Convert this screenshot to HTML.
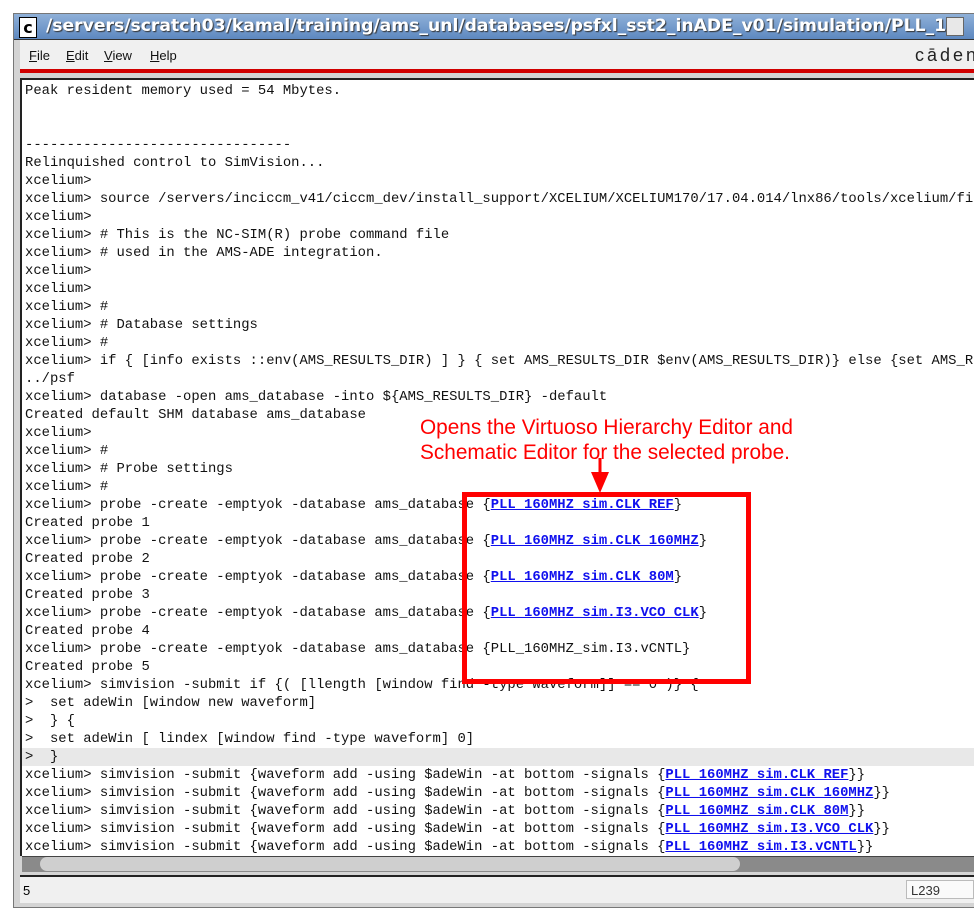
<!DOCTYPE html>
<html><head><style>
html,body{margin:0;width:974px;height:913px;overflow:hidden}
body{background:#fff;position:relative;font-family:"Liberation Sans",sans-serif}
.win{position:absolute;left:13px;top:13px;width:961px;height:895px;background:#d4d4d4;border-left:1px solid #777;border-top:1px solid #777;border-bottom:1px solid #777;box-sizing:border-box}
.title{position:absolute;left:14px;top:14px;width:960px;height:25px;background:linear-gradient(#8fb0d8,#5d88c0);border-bottom:1px solid #333;overflow:hidden}
.title span{position:absolute;left:32px;top:0;font:bold 17.2px "DejaVu Sans",sans-serif;color:#fff;text-shadow:1px 1px 1px #333;white-space:nowrap;line-height:25px}
.cicon{position:absolute;left:19px;top:17px;width:16px;height:19px;background:#fff;border:1px solid #000;font:bold 16px "DejaVu Sans";line-height:19px;text-align:center}
.minb{position:absolute;left:946px;top:17px;width:18px;height:19px;background:#e8e8e8;border:1px solid #666;box-sizing:border-box}
.menu{position:absolute;left:20px;top:40px;width:954px;height:30px;background:#f0f0f0;overflow:hidden}
.menu span{position:absolute;top:8px;font-size:13px;color:#111}
.red{position:absolute;left:20px;top:69px;width:954px;height:4px;background:#d00000}
.text{position:absolute;left:20px;top:78px;width:954px;height:778px;background:#fff;border-top:2px solid #222;border-left:2px solid #222;box-sizing:border-box}
pre{margin:0;position:absolute;left:25px;top:82px;font:13.86px/18px "Liberation Mono",monospace;color:#111;white-space:pre;width:949px;overflow:hidden}
a{color:#1010ee;font-weight:bold;text-decoration:underline}
.hl{position:absolute;left:22px;top:748px;width:952px;height:18px;background:#e8e8e8}
.sb{position:absolute;left:22px;top:856px;width:952px;height:16px;background:#8a8a8a;border-top:1px solid #444;box-sizing:border-box}
.thumb{position:absolute;left:40px;top:857px;width:700px;height:14px;background:#cfcfcf;border-radius:7px}
.status{position:absolute;left:20px;top:875px;width:954px;height:28px;background:#f0f0f0;border-top:2px solid #222;box-sizing:border-box}
.l239{position:absolute;left:906px;top:880px;width:68px;height:19px;background:#fafafa;border:1px solid #bbb;font-size:13px;line-height:19px;padding-left:4px;color:#333;box-sizing:border-box}
.box{position:absolute;left:462px;top:492px;width:279px;height:182px;border:5px solid #f00}
.ann{position:absolute;left:420px;top:415px;color:#f00;font:20.8px/25px "Liberation Sans",sans-serif;white-space:nowrap}
</style></head><body>
<div class="win"></div>
<div class="title"><span>/servers/scratch03/kamal/training/ams_unl/databases/psfxl_sst2_inADE_v01/simulation/PLL_1</span></div>
<div class="cicon">c</div>
<div class="minb"></div>
<div class="menu"><span style="left:9px"><u>F</u>ile</span><span style="left:46px"><u>E</u>dit</span><span style="left:84px"><u>V</u>iew</span><span style="left:130px"><u>H</u>elp</span><span style="left:895px;top:5px;font-size:18px;letter-spacing:3px;color:#222">cāden</span></div>
<div class="red"></div>
<div class="text"></div>
<div class="hl"></div>
<pre>Peak resident memory used = 54 Mbytes.


--------------------------------
Relinquished control to SimVision...
xcelium>
xcelium> source /servers/inciccm_v41/ciccm_dev/install_support/XCELIUM/XCELIUM170/17.04.014/lnx86/tools/xcelium/fi
xcelium>
xcelium> # This is the NC-SIM(R) probe command file
xcelium> # used in the AMS-ADE integration.
xcelium>
xcelium>
xcelium> #
xcelium> # Database settings
xcelium> #
xcelium> if { [info exists ::env(AMS_RESULTS_DIR) ] } { set AMS_RESULTS_DIR $env(AMS_RESULTS_DIR)} else {set AMS_RE
../psf
xcelium> database -open ams_database -into ${AMS_RESULTS_DIR} -default
Created default SHM database ams_database
xcelium>
xcelium> #
xcelium> # Probe settings
xcelium> #
xcelium> probe -create -emptyok -database ams_database {<a>PLL_160MHZ_sim.CLK_REF</a>}
Created probe 1
xcelium> probe -create -emptyok -database ams_database {<a>PLL_160MHZ_sim.CLK_160MHZ</a>}
Created probe 2
xcelium> probe -create -emptyok -database ams_database {<a>PLL_160MHZ_sim.CLK_80M</a>}
Created probe 3
xcelium> probe -create -emptyok -database ams_database {<a>PLL_160MHZ_sim.I3.VCO_CLK</a>}
Created probe 4
xcelium> probe -create -emptyok -database ams_database {PLL_160MHZ_sim.I3.vCNTL}
Created probe 5
xcelium> simvision -submit if {( [llength [window find -type waveform]] == 0 )} {
&gt;  set adeWin [window new waveform]
&gt;  } {
&gt;  set adeWin [ lindex [window find -type waveform] 0]
&gt;  }
xcelium> simvision -submit {waveform add -using $adeWin -at bottom -signals {<a>PLL_160MHZ_sim.CLK_REF</a>}}
xcelium> simvision -submit {waveform add -using $adeWin -at bottom -signals {<a>PLL_160MHZ_sim.CLK_160MHZ</a>}}
xcelium> simvision -submit {waveform add -using $adeWin -at bottom -signals {<a>PLL_160MHZ_sim.CLK_80M</a>}}
xcelium> simvision -submit {waveform add -using $adeWin -at bottom -signals {<a>PLL_160MHZ_sim.I3.VCO_CLK</a>}}
xcelium> simvision -submit {waveform add -using $adeWin -at bottom -signals {<a>PLL_160MHZ_sim.I3.vCNTL</a>}}</pre>
<div class="sb"></div><div class="thumb"></div>
<div class="status"><span style="position:absolute;left:3px;top:6px;font-size:13px">5</span></div>
<div class="l239">L239</div>
<div class="box"></div>
<div class="ann">Opens the Virtuoso Hierarchy Editor and<br>Schematic Editor for the selected probe.</div>
<svg style="position:absolute;left:588px;top:458px" width="24" height="36"><line x1="12" y1="0" x2="12" y2="18" stroke="#f00" stroke-width="3"/><polygon points="3,14 21,14 12,35" fill="#f00"/></svg>
</body></html>
